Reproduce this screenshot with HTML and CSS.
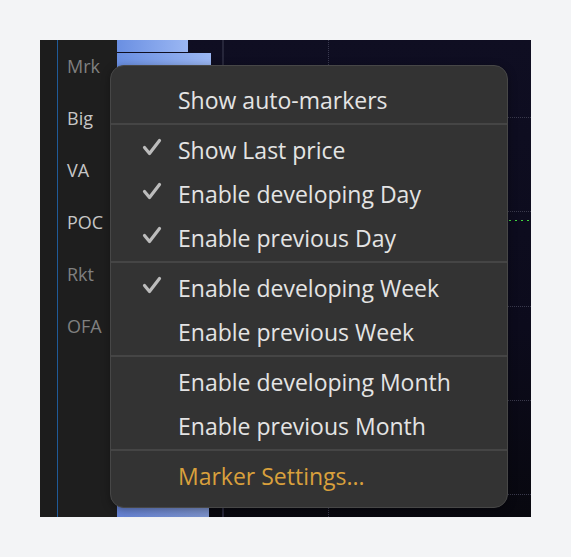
FILE: index.html
```html
<!DOCTYPE html>
<html>
<head>
<meta charset="utf-8">
<link rel="stylesheet" href="styles.css">
</head>
<body>
<div class="frame">
  <div class="side">
    <div class="strip"></div>
    <div class="labels">
      <div class="lbl dim">Mrk</div>
      <div class="lbl">Big</div>
      <div class="lbl">VA</div>
      <div class="lbl">POC</div>
      <div class="lbl dim">Rkt</div>
      <div class="lbl dim">OFA</div>
    </div>
  </div>
  <div class="chart">
    <div class="bar bar1"></div>
    <div class="bar bar2"></div>
    <div class="vline solid"></div>
    <div class="vline dotted"></div>
    <div class="hline" style="top:77px"></div>
    <div class="hline" style="top:171px"></div>
    <div class="hline" style="top:266px"></div>
    <div class="hline" style="top:360px"></div>
    <div class="hline" style="top:454px"></div>
    <div class="green"></div>
    <div class="bar bar3"></div>
  </div>

  <div class="menu">
    <div class="item">Show auto-markers</div>
    <div class="sep"></div>
    <div class="item"><svg class="chk" width="20" height="19" viewBox="0 0 20 19"><polyline points="2.5,9.5 7.5,15.5 17.5,2.5" fill="none" stroke="#bcbcbc" stroke-width="3.2" stroke-linecap="round" stroke-linejoin="round"/></svg>Show Last price</div>
    <div class="item"><svg class="chk" width="20" height="19" viewBox="0 0 20 19"><polyline points="2.5,9.5 7.5,15.5 17.5,2.5" fill="none" stroke="#bcbcbc" stroke-width="3.2" stroke-linecap="round" stroke-linejoin="round"/></svg>Enable developing Day</div>
    <div class="item"><svg class="chk" width="20" height="19" viewBox="0 0 20 19"><polyline points="2.5,9.5 7.5,15.5 17.5,2.5" fill="none" stroke="#bcbcbc" stroke-width="3.2" stroke-linecap="round" stroke-linejoin="round"/></svg>Enable previous Day</div>
    <div class="sep"></div>
    <div class="item"><svg class="chk" width="20" height="19" viewBox="0 0 20 19"><polyline points="2.5,9.5 7.5,15.5 17.5,2.5" fill="none" stroke="#bcbcbc" stroke-width="3.2" stroke-linecap="round" stroke-linejoin="round"/></svg>Enable developing Week</div>
    <div class="item">Enable previous Week</div>
    <div class="sep"></div>
    <div class="item">Enable developing Month</div>
    <div class="item">Enable previous Month</div>
    <div class="sep"></div>
    <div class="item accent">Marker Settings...</div>
  </div>
</div>
</body>
</html>
```

FILE: styles.css
```css
html, body {
  margin: 0;
  padding: 0;
  background: #f3f4f6;
}
body {
  padding: 40px;
  font-family: "Open Sans", "Noto Sans", sans-serif;
}
.frame {
  position: relative;
  width: 491px;
  height: 477px;
  display: flex;
}
.side {
  width: 77px;
  display: flex;
  background: #1e1e1e;
}
.strip {
  width: 17px;
  border-right: 1px solid #1f5a98;
  background: #1c1c1c;
}
.labels {
  flex: 1;
  display: flex;
  flex-direction: column;
  padding-left: 9px;
}
.lbl {
  height: 52px;
  line-height: 52px;
  font-size: 18px;
  color: #c6c6c6;
}
.lbl.dim {
  color: #808080;
}
.chart {
  flex: 1;
  position: relative;
  background: linear-gradient(180deg, #0f0e22 0%, #0c0b1c 60%, #08080f 100%);
  overflow: hidden;
}
.bar {
  background: linear-gradient(90deg, #6a8fe2 0%, #9bb7f3 100%);
}
.bar1 {
  width: 71px;
  height: 12px;
  margin-bottom: 1px;
}
.bar2 {
  width: 94px;
  height: 30px;
}
.bar3 {
  position: absolute;
  left: 0;
  bottom: 0;
  width: 92px;
  height: 30px;
  background: linear-gradient(90deg, #6582d4 0%, #7c92cc 100%);
}
.vline {
  position: absolute;
  top: 0;
  bottom: 0;
  width: 0;
}
.vline.solid {
  left: 105px;
  border-left: 2px solid #26263a;
}
.vline.dotted {
  left: 211px;
  border-left: 1px dotted #3a3a50;
}
.hline {
  position: absolute;
  left: 0;
  right: 0;
  height: 0;
  border-top: 1px dotted #3a3a4c;
}
.green {
  position: absolute;
  top: 180px;
  left: 200px;
  right: 0;
  height: 1px;
  background: repeating-linear-gradient(90deg, #3fd63f 0 2px, transparent 2px 6px);
}
.menu {
  position: absolute;
  left: 70px;
  top: 25px;
  width: 396px;
  height: 429px;
  box-sizing: content-box;
  background: #333333;
  border: 1px solid #474747;
  border-radius: 14px;
  padding: 12px 0 0;
  box-shadow: 0 2px 8px rgba(0,0,0,0.35);
}
.item {
  position: relative;
  height: 44px;
  line-height: 44px;
  padding-left: 67px;
  font-size: 23px;
  color: #e4e4e4;
  white-space: nowrap;
}
.item.accent {
  color: #d9a03c;
}
.chk {
  position: absolute;
  left: 31px;
  top: 10px;
}
.sep {
  height: 2px;
  background: #454545;
  margin: 1px 0 3px;
}
```
